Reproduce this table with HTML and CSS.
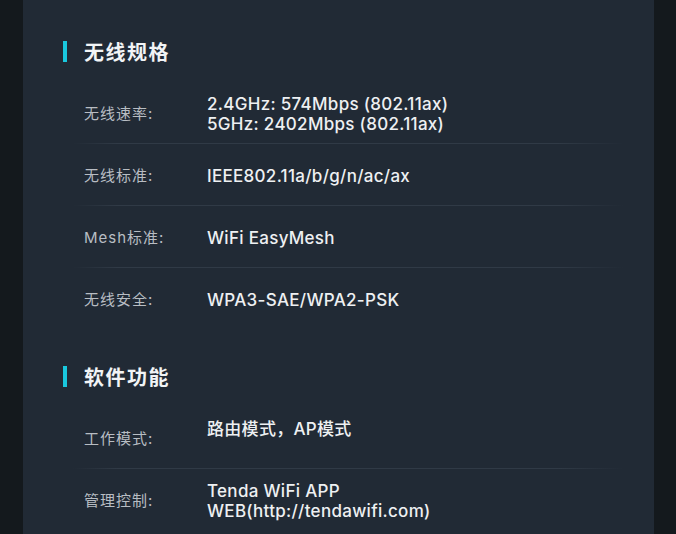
FILE: index.html
```html
<!DOCTYPE html>
<html lang="zh-CN">
<head>
<meta charset="utf-8">
<title>规格参数</title>
<link rel="stylesheet" href="styles.css">
</head>
<body>
<div class="page">
  <div class="side side-left"></div>
  <main class="panel">
    <section class="section first">
      <h2 class="title">无线规格</h2>
      <div class="row">
        <div class="label">无线速率:</div>
        <div class="value">2.4GHz: 574Mbps (802.11ax)<br>5GHz: 2402Mbps (802.11ax)</div>
      </div>
      <div class="row">
        <div class="label">无线标准:</div>
        <div class="value">IEEE802.11a/b/g/n/ac/ax</div>
      </div>
      <div class="row">
        <div class="label">Mesh标准:</div>
        <div class="value">WiFi EasyMesh</div>
      </div>
      <div class="row">
        <div class="label">无线安全:</div>
        <div class="value">WPA3-SAE/WPA2-PSK</div>
      </div>
    </section>
    <section class="section">
      <h2 class="title">软件功能</h2>
      <div class="row">
        <div class="label">工作模式:</div>
        <div class="value raised">路由模式，AP模式</div>
      </div>
      <div class="row">
        <div class="label">管理控制:</div>
        <div class="value">Tenda WiFi APP<br>WEB(http://tendawifi.com)</div>
      </div>
    </section>
  </main>
  <div class="side side-right"></div>
</div>
</body>
</html>
```

FILE: styles.css
```css
html, body {
  margin: 0;
  padding: 0;
  background: #13181c;
}
body {
  font-family: "Inter", "Noto Sans CJK SC", sans-serif;
  -webkit-font-smoothing: antialiased;
}
.page {
  display: flex;
  width: 676px;
  height: 534px;
  overflow: hidden;
}
.side {
  flex: none;
  background: #14191d;
}
.side-left { width: 23px; }
.side-right { width: 22px; }
.panel {
  flex: none;
  width: 631px;
  background: #212a35;
  padding: 36px 0 0 40px;
  box-sizing: border-box;
}
.section + .section {
  margin-top: 32px;
}
.title {
  margin: 0 0 15px;
  height: 30px;
  display: flex;
  align-items: center;
  font-family: "Noto Sans CJK SC", sans-serif;
  font-size: 20px;
  font-weight: 700;
  letter-spacing: 1.5px;
  color: #f2f4f6;
}
.title::before {
  content: "";
  width: 4px;
  height: 21px;
  background: #19c8de;
  margin-right: 17px;
}
.row {
  display: flex;
  align-items: center;
  height: 62px;
  position: relative;
  padding-left: 21px;
}
.row:not(:last-child)::after {
  content: "";
  position: absolute;
  left: 10px;
  right: 30px;
  bottom: -1px;
  height: 1px;
  background: linear-gradient(90deg, rgba(48,58,70,0) 0%, #303a46 8%, #303a46 88%, rgba(48,58,70,0) 100%);
}
.label {
  width: 123px;
  flex: none;
  font-size: 15px;
  color: #b8bdc3;
  letter-spacing: 1px;
}
.value {
  font-size: 17px;
  font-weight: 500;
  line-height: 20px;
  letter-spacing: 0.3px;
  color: #eef0f2;
  padding-top: 3px;
}
.value.raised {
  padding-top: 0;
  padding-bottom: 16px;
}
```
